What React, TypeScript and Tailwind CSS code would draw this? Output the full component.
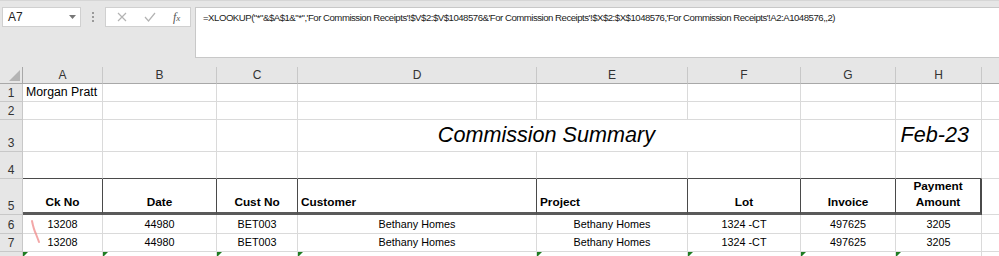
import React from "react";

const COLS = [
  { letter: "A", w: "w-[80px]" },
  { letter: "B", w: "w-[114px]" },
  { letter: "C", w: "w-[81px]" },
  { letter: "D", w: "w-[239px]" },
  { letter: "E", w: "w-[151px]" },
  { letter: "F", w: "w-[113px]" },
  { letter: "G", w: "w-[95px]" },
  { letter: "H", w: "w-[86px]" },
  { letter: "", w: "w-[40px]" },
];

const FORMULA =
  "=XLOOKUP(\"*\"&$A$1&\"*\",'For Commission Receipts'!$V$2:$V$1048576&'For Commission Receipts'!$X$2:$X$1048576,'For Commission Receipts'!A2:A1048576,,2)";

const DATA = ["13208", "44980", "BET003", "Bethany Homes", "Bethany Homes", "1324 -CT", "497625", "3205"];

const HEADS: { t: React.ReactNode; left?: boolean }[] = [
  { t: "Ck No" },
  { t: "Date" },
  { t: "Cust No" },
  { t: "Customer", left: true },
  { t: "Project", left: true },
  { t: "Lot" },
  { t: "Invoice" },
  { t: <>Payment<br />Amount</> },
];

function RowNum({ n, h }: { n: string; h: string }) {
  return (
    <div className={`w-[23px] shrink-0 ${h} bg-[#e6e6e6] border-r border-b border-[#c8c8c8] flex items-end justify-center pb-[1px] text-[12px] leading-[14px] text-[#333]`}>
      {n}
    </div>
  );
}

function FormulaBar() {
  return (
    <div className="h-[67px] bg-[#e6e6e6] flex items-start pt-[6px] pl-[2px] border-t border-[#d6d6d6]">
      <div className="w-[79px] h-[20px] bg-white border border-[#d0d0d0] flex items-center justify-between pl-[5px] pr-[4px] text-[12px] text-[#222]">
        <span>A7</span>
        <svg width="7" height="4" viewBox="0 0 7 4"><path d="M0 0h7L3.5 4z" fill="#777" /></svg>
      </div>
      <div className="w-[24px] h-[20px] flex flex-col items-center justify-center gap-[2px]">
        <span className="w-[2px] h-[2px] bg-[#9a9a9a]" />
        <span className="w-[2px] h-[2px] bg-[#9a9a9a]" />
        <span className="w-[2px] h-[2px] bg-[#9a9a9a]" />
      </div>
      <div className="w-[86px] h-[20px] bg-white border border-[#d0d0d0] flex items-center pl-[11px]">
        <svg width="10" height="10" viewBox="0 0 10 10"><path d="M1 1l8 8M9 1l-8 8" stroke="#b3b3b3" strokeWidth="1.2" /></svg>
        <svg className="ml-[17px]" width="12" height="10" viewBox="0 0 12 10"><path d="M1 5l3.5 4L11 1" stroke="#b3b3b3" strokeWidth="1.2" fill="none" /></svg>
        <span className="ml-[17px] italic text-[12px] text-[#555] font-['Liberation_Serif',serif]">f<span className="text-[9px]">x</span></span>
      </div>
      <div className="ml-[4px] flex-1 h-[51px] bg-white border border-r-0 border-[#c8c8c8] pl-[7px] pt-[2px] text-[9.6px] leading-[16px] text-[#222] whitespace-nowrap overflow-hidden tracking-[-0.48px]">
        {FORMULA}
      </div>
    </div>
  );
}

export default function App() {
  return (
    <div className="w-[999px] h-[256px] overflow-hidden bg-white relative font-['Liberation_Sans',Arial,sans-serif]">
      <FormulaBar />

      {/* column letters */}
      <div className="flex h-[17px]">
        <div className="w-[23px] shrink-0 bg-[#e6e6e6] border-r border-b border-[#a8a8a8] flex items-end justify-end p-[2px]">
          <svg width="11" height="11" viewBox="0 0 11 11"><path d="M11 0v11H0z" fill="#b4b4b4" /></svg>
        </div>
        {COLS.map((c) => (
          <div key={c.letter + c.w} className={`${c.w} shrink-0 bg-[#e6e6e6] border-r border-[#c8c8c8] border-b border-b-[#a8a8a8] flex items-center justify-center text-[12px] text-[#333]`}>
            {c.letter}
          </div>
        ))}
      </div>

      {/* row 1 */}
      <div className="flex h-[18px]">
        <RowNum n="1" h="h-[18px]" />
        {COLS.map((c, i) => (
          <div key={i} className={`${c.w} shrink-0 border-r border-b border-[#dadada] flex items-end pl-[3px] pb-[1px] text-[12.3px] leading-[15px] text-black whitespace-nowrap`}>
            {i === 0 ? "Morgan Pratt" : ""}
          </div>
        ))}
      </div>

      {/* row 2 */}
      <div className="flex h-[18px]">
        <RowNum n="2" h="h-[18px]" />
        {COLS.map((c, i) => (
          <div key={i} className={`${c.w} shrink-0 border-r border-b border-[#dadada]`} />
        ))}
      </div>

      {/* row 3: title */}
      <div className="flex h-[32px]">
        <RowNum n="3" h="h-[32px]" />
        <div className="w-[80px] shrink-0 border-r border-b border-[#dadada]" />
        <div className="w-[114px] shrink-0 border-r border-b border-[#dadada]" />
        <div className="w-[81px] shrink-0 border-r border-b border-[#dadada]" />
        <div className="w-[503px] shrink-0 border-r border-b border-[#dadada] flex items-end justify-end pr-[145px] pb-[3px] italic text-[21.6px] leading-[26px] text-black whitespace-nowrap">
          Commission Summary
        </div>
        <div className="w-[95px] shrink-0 border-r border-b border-[#dadada]" />
        <div className="w-[86px] shrink-0 border-r border-b border-[#dadada] flex items-end justify-end pr-[12px] pb-[3px] italic text-[21.6px] leading-[26px] text-black">
          Feb-23
        </div>
        <div className="w-[40px] shrink-0 border-r border-b border-[#dadada]" />
      </div>

      {/* row 4 */}
      <div className="flex h-[27px]">
        <RowNum n="4" h="h-[27px]" />
        {COLS.map((c, i) => (
          <div key={i} className={`${c.w} shrink-0 border-r border-[#dadada] border-b ${i < 8 ? "border-b-[#4a4a4a]" : ""}`} />
        ))}
      </div>

      {/* row 5: headers */}
      <div className="flex h-[36px]">
        <RowNum n="5" h="h-[36px]" />
        {COLS.map((c, i) =>
          i < 8 ? (
            <div
              key={i}
              className={`${c.w} shrink-0 border-r ${i === 7 ? "border-r-2" : ""} border-r-[#4a4a4a] border-b-[3px] border-b-[#5a5a5a] flex items-end pb-[2px] font-bold text-[11.8px] leading-[16px] text-black ${HEADS[i].left ? "justify-start pl-[3px]" : "justify-center text-center"}`}
            >
              <span>{HEADS[i].t}</span>
            </div>
          ) : (
            <div key={i} className={`${c.w} shrink-0 border-r border-b border-[#dadada]`} />
          )
        )}
      </div>

      {/* rows 6, 7 */}
      {["6", "7"].map((n) => (
        <div key={n} className={`flex ${n === "6" ? "h-[19px]" : "h-[18px]"}`}>
          <RowNum n={n} h={n === "6" ? "h-[19px]" : "h-[18px]"} />
          {COLS.map((c, i) => (
            <div key={i} className={`${c.w} shrink-0 border-r border-b border-[#dadada] flex items-end justify-center pb-[2px] text-[10.8px] leading-[13px] text-black whitespace-nowrap`}>
              {i < 8 ? DATA[i] : ""}
            </div>
          ))}
        </div>
      ))}

      {/* row 8 (only its top edge shows) */}
      <div className="flex h-[20px]">
        <RowNum n="" h="h-[20px]" />
        {COLS.map((c, i) => (
          <div key={i} className={`${c.w} shrink-0 border-r border-b border-[#dadada] flex items-start`}>
            {i < 8 && <span className="w-0 h-0 border-t-[5px] border-r-[5px] border-t-[#1e7d22] border-r-transparent" />}
          </div>
        ))}
      </div>

      {/* pen mark over A6:A7 */}
      <svg className="absolute left-[29px] top-[219px]" width="14" height="26" viewBox="0 0 14 26">
        <path d="M3 2 C4 7 5 11 7 15 C8 18 9 20 10 23" stroke="#ef8a8a" strokeWidth="2" strokeOpacity="0.75" fill="none" strokeLinecap="round" />
      </svg>
    </div>
  );
}
